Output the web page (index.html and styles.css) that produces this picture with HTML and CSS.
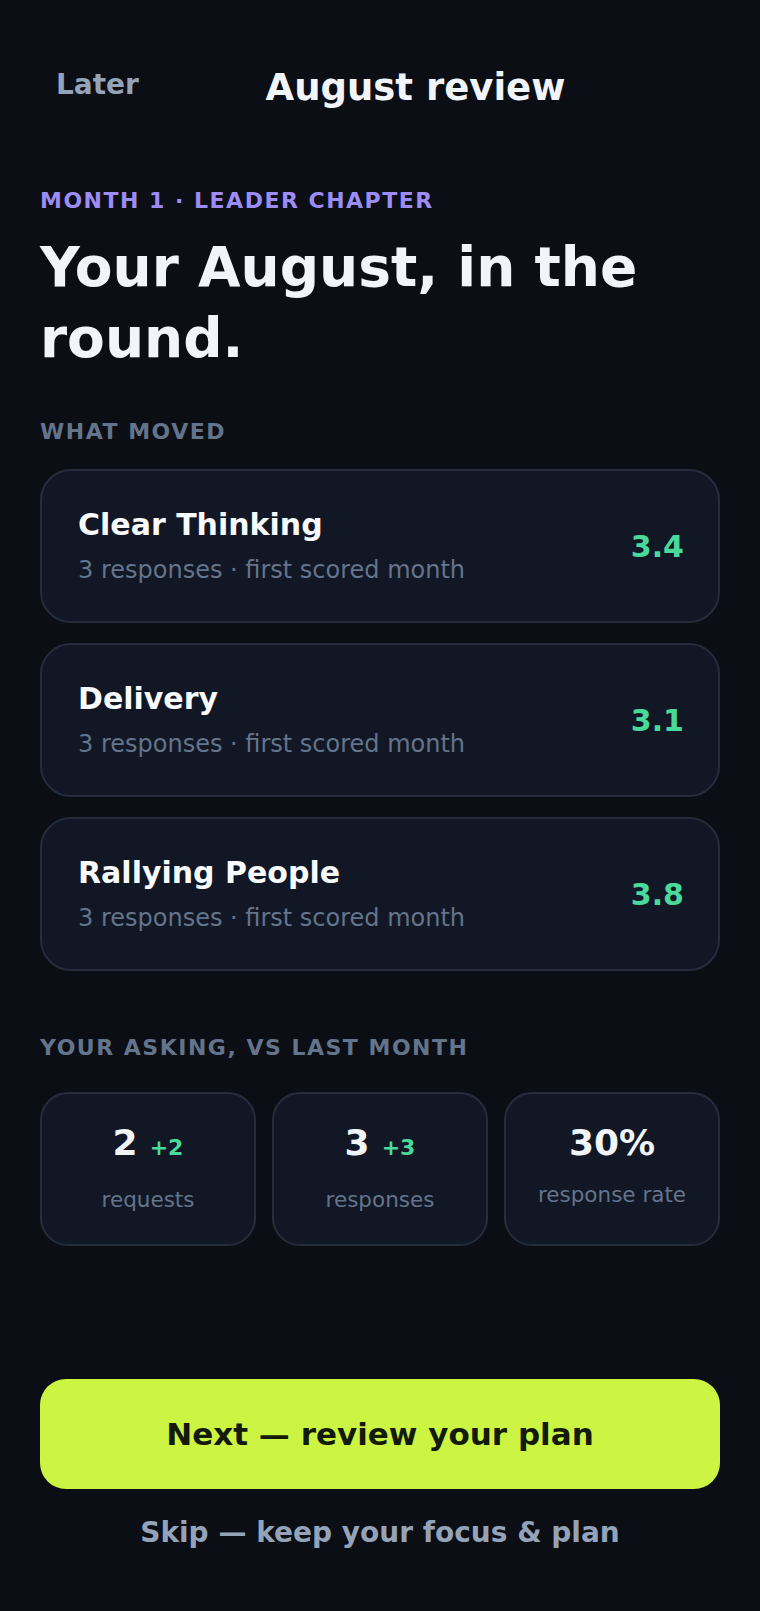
FILE: index.html
```html
<!DOCTYPE html>
<html lang="en">
<head>
    <meta charset="UTF-8">
    <meta name="viewport" content="width=device-width, initial-scale=1.0">
    <title>August review</title>
    <link rel="stylesheet" href="styles.css">
</head>
<body>
    <div class="screen">
        <header class="topbar">
            <button class="link-button">Later</button>
            <h1 class="topbar-title">August review</h1>
            <span class="topbar-spacer"></span>
        </header>

        <main class="content">
            <p class="eyebrow">Month 1 · Leader chapter</p>
            <h2 class="headline">Your August, in the round.</h2>

            <h3 class="section-label">What moved</h3>
            <div class="skill-list">
                <div class="skill-card">
                    <div class="skill-info">
                        <div class="skill-name">Clear Thinking</div>
                        <div class="skill-meta">3 responses · first scored month</div>
                    </div>
                    <div class="skill-score">3.4</div>
                </div>
                <div class="skill-card">
                    <div class="skill-info">
                        <div class="skill-name">Delivery</div>
                        <div class="skill-meta">3 responses · first scored month</div>
                    </div>
                    <div class="skill-score">3.1</div>
                </div>
                <div class="skill-card">
                    <div class="skill-info">
                        <div class="skill-name">Rallying People</div>
                        <div class="skill-meta">3 responses · first scored month</div>
                    </div>
                    <div class="skill-score">3.8</div>
                </div>
            </div>

            <h3 class="section-label section-label--spaced">Your asking, vs last month</h3>
            <div class="stat-grid">
                <div class="stat-card">
                    <div class="stat-value">2<span class="stat-delta">+2</span></div>
                    <div class="stat-label">requests</div>
                </div>
                <div class="stat-card">
                    <div class="stat-value">3<span class="stat-delta">+3</span></div>
                    <div class="stat-label">responses</div>
                </div>
                <div class="stat-card">
                    <div class="stat-value">30%</div>
                    <div class="stat-label">response rate</div>
                </div>
            </div>
        </main>

        <footer class="actions">
            <button class="primary-button">Next — review your plan</button>
            <button class="skip-button">Skip — keep your focus &amp; plan</button>
        </footer>
    </div>
</body>
</html>
```

FILE: styles.css
```css
:root {
    --bg: #0b0e14;
    --card-bg: #111724;
    --card-border: #252d3c;
    --text: #f1f5f9;
    --muted: #64748b;
    --soft: #94a3b8;
    --violet: #9d8cf4;
    --green: #4ad99a;
    --lime: #cbf542;
}

* {
    margin: 0;
    padding: 0;
    box-sizing: border-box;
    font-family: "DejaVu Sans", "Noto Sans", sans-serif;
}

html, body {
    background-color: var(--bg);
    color: var(--text);
}

.screen {
    min-height: 100vh;
    display: flex;
    flex-direction: column;
    padding: 0 40px 58px;
}

.topbar {
    display: grid;
    grid-template-columns: auto 1fr 44px;
    align-items: center;
    height: 58px;
    margin-top: 58px;
}

.link-button {
    background: none;
    border: none;
    color: var(--soft);
    font-size: 28px;
    font-weight: 700;
    padding: 0 16px;
    margin-top: -5px;
    cursor: pointer;
}

.topbar-title {
    text-align: center;
    font-size: 37px;
    font-weight: 700;
    color: var(--text);
}

.content {
    padding-top: 70px;
}

.eyebrow {
    font-size: 22px;
    line-height: 30px;
    font-weight: 700;
    letter-spacing: 1.5px;
    text-transform: uppercase;
    color: var(--violet);
}

.headline {
    margin-top: 16px;
    font-size: 55px;
    line-height: 71px;
    font-weight: 700;
    color: var(--text);
}

.section-label {
    margin-top: 43px;
    margin-bottom: 22px;
    font-size: 22px;
    line-height: 30px;
    font-weight: 700;
    letter-spacing: 1.5px;
    text-transform: uppercase;
    color: var(--muted);
}

.section-label--spaced {
    margin-top: 62px;
    margin-bottom: 29px;
}

.skill-list {
    display: flex;
    flex-direction: column;
    gap: 20px;
}

.skill-card {
    display: flex;
    align-items: center;
    justify-content: space-between;
    padding: 34px 34px 34px 36px;
    background: var(--card-bg);
    border: 2px solid var(--card-border);
    border-radius: 31px;
}

.skill-name {
    font-size: 30px;
    line-height: 39px;
    font-weight: 700;
    color: #f8fafc;
}

.skill-meta {
    margin-top: 9px;
    font-size: 24px;
    line-height: 34px;
    color: var(--muted);
}

.skill-score {
    font-size: 30px;
    font-weight: 700;
    color: var(--green);
}

.stat-grid {
    display: grid;
    grid-template-columns: repeat(3, 1fr);
    gap: 16px;
}

.stat-card {
    display: flex;
    flex-direction: column;
    align-items: center;
    gap: 15px;
    padding: 27px 12px 29px;
    background: var(--card-bg);
    border: 2px solid var(--card-border);
    border-radius: 28px;
}

.stat-value {
    font-size: 36px;
    line-height: 43px;
    font-weight: 700;
    color: var(--text);
}

.stat-delta {
    margin-left: 12px;
    font-size: 22px;
    color: var(--green);
}

.stat-label {
    font-size: 21.5px;
    line-height: 31px;
    color: var(--muted);
}

.actions {
    margin-top: auto;
    display: flex;
    flex-direction: column;
    align-items: center;
    gap: 24px;
}

.primary-button {
    width: 100%;
    height: 110px;
    background: var(--lime);
    color: #141a08;
    border: none;
    border-radius: 26px;
    font-size: 31px;
    font-weight: 700;
    cursor: pointer;
}

.skip-button {
    background: none;
    border: none;
    color: var(--soft);
    font-size: 28px;
    line-height: 40px;
    font-weight: 700;
    cursor: pointer;
}
```
